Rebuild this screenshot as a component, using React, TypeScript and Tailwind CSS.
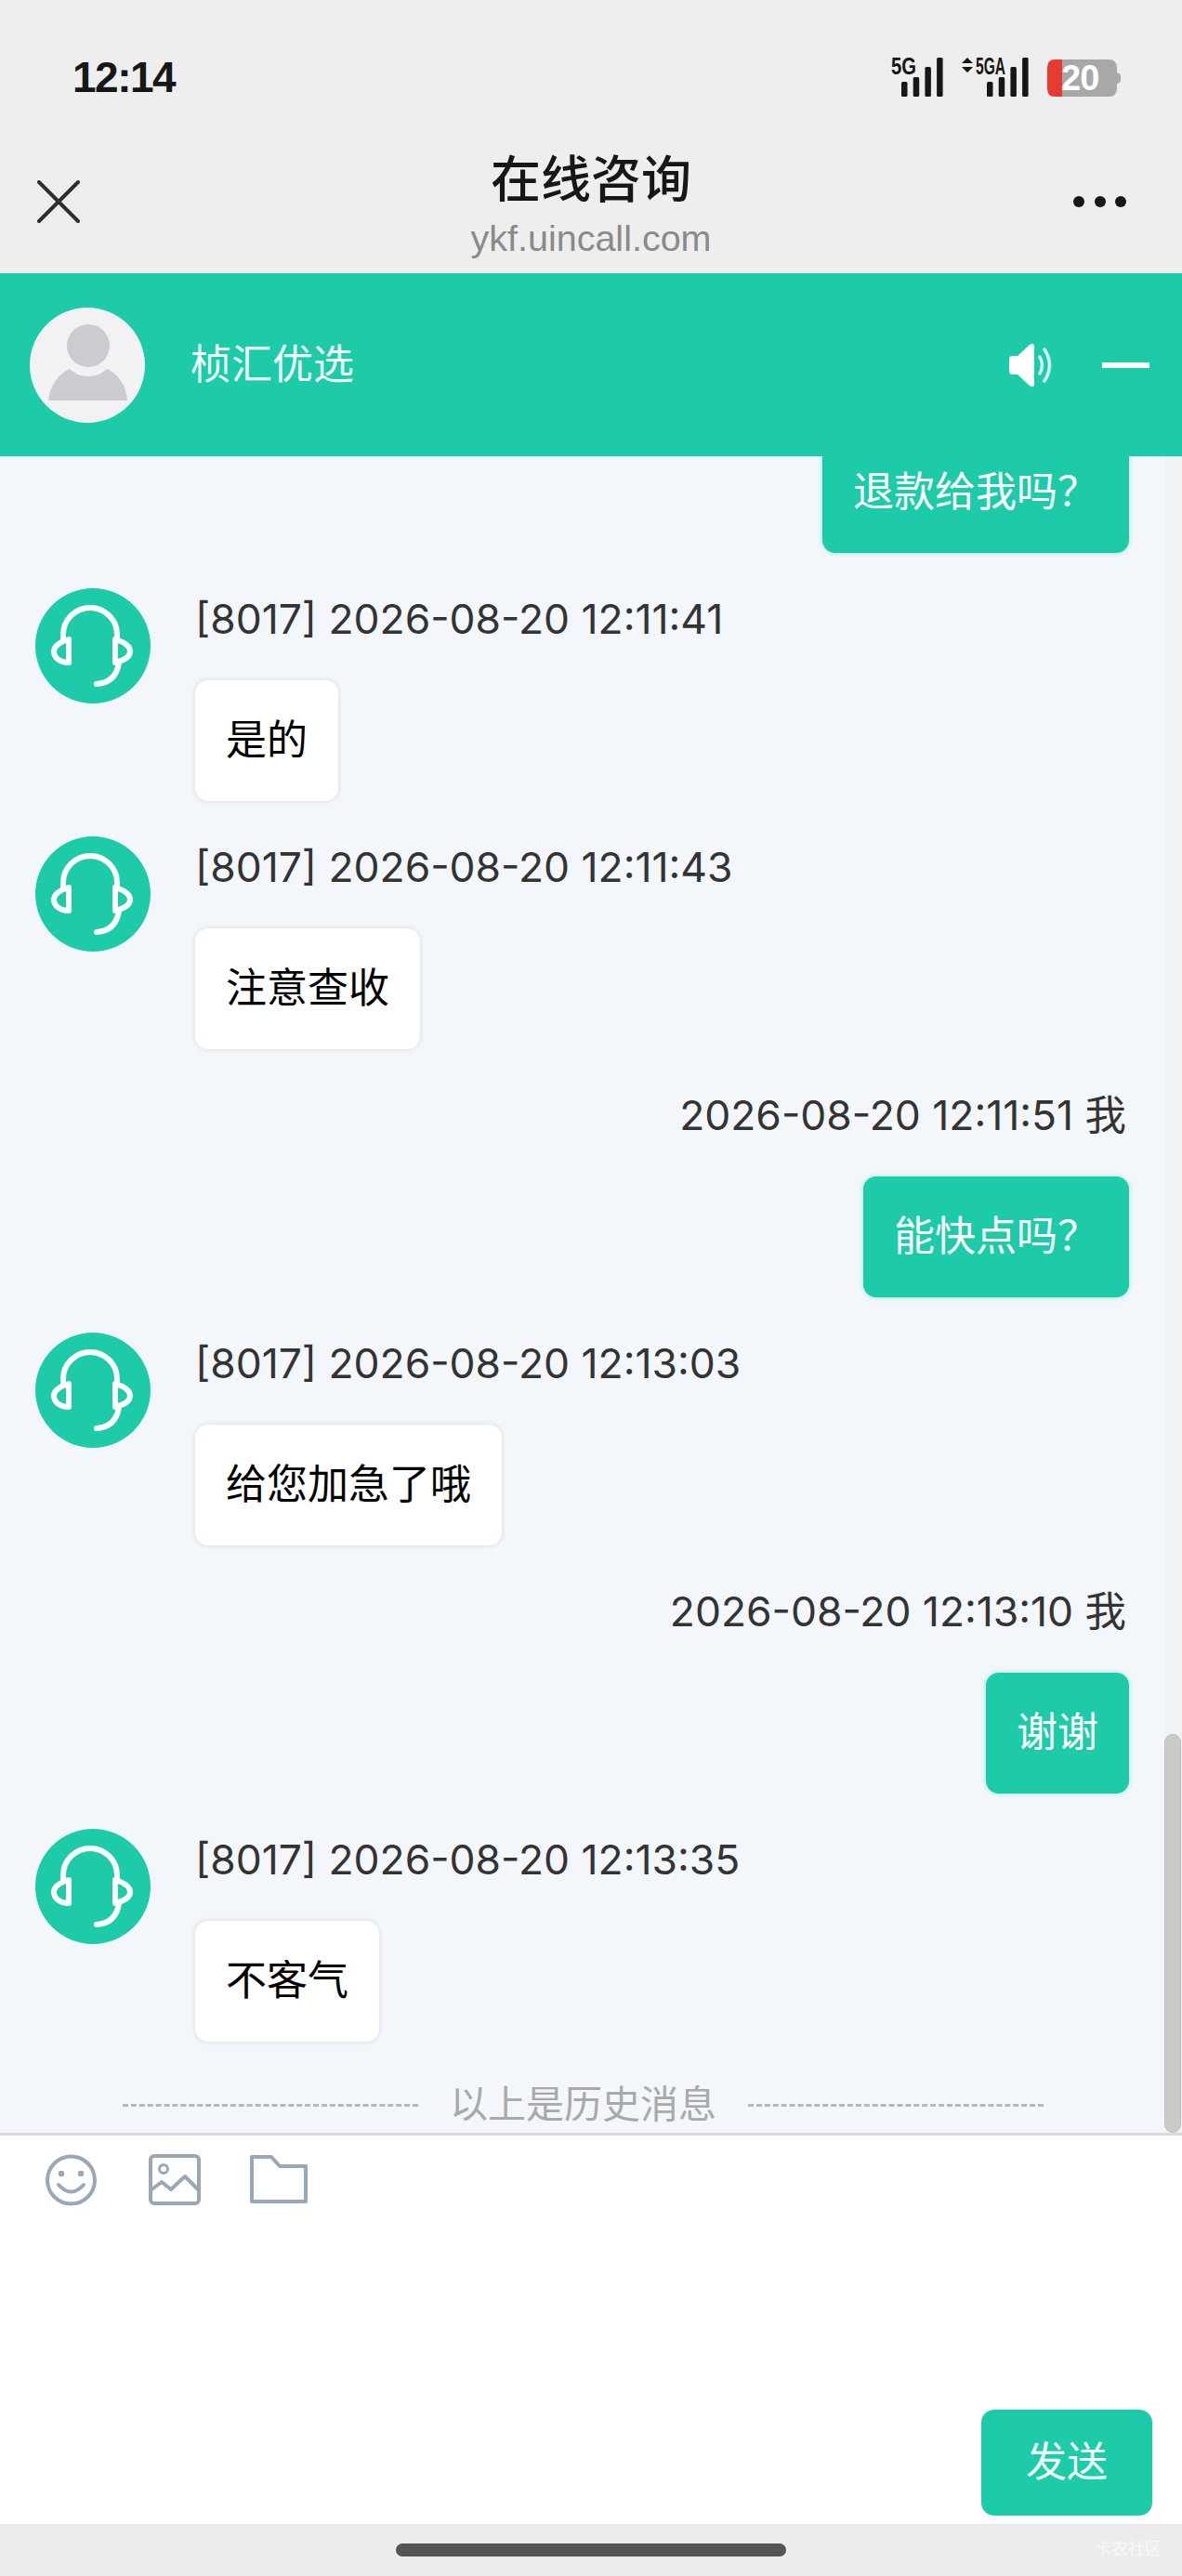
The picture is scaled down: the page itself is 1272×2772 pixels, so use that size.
import React from "react";

type Msg = { side: "agent" | "me"; time: string; text: string };

const messages: Msg[] = [
  { side: "agent", time: "[8017] 2026-08-20 12:11:41", text: "是的" },
  { side: "agent", time: "[8017] 2026-08-20 12:11:43", text: "注意查收" },
  { side: "me", time: "2026-08-20 12:11:51 我", text: "能快点吗？" },
  { side: "agent", time: "[8017] 2026-08-20 12:13:03", text: "给您加急了哦" },
  { side: "me", time: "2026-08-20 12:13:10 我", text: "谢谢" },
  { side: "agent", time: "[8017] 2026-08-20 12:13:35", text: "不客气" },
];

// Signal bars shared by both SIM indicators
function Bars({ x }: { x: number }) {
  return (
    <g fill="#171717">
      <rect x={x} y="26" width="6.5" height="16" rx="1.5" />
      <rect x={x + 12.7} y="21" width="6.5" height="21" rx="1.5" />
      <rect x={x + 25.4} y="10" width="6.5" height="32" rx="1.5" />
      <rect x={x + 38.1} y="0" width="6.5" height="42" rx="1.5" />
    </g>
  );
}

function StatusIcons() {
  return (
    <svg width="250" height="52" viewBox="0 -8 250 52" className="block">
      <text x="0" y="18" fontSize="25" fontWeight="700" fill="#171717" textLength="27" lengthAdjust="spacingAndGlyphs" fontFamily="Liberation Sans, sans-serif">5G</text>
      <Bars x={11} />
      <path d="M76 6 L82 0 L88 6 Z M76 10 L88 10 L82 16 Z" fill="#171717" />
      <text x="91" y="18" fontSize="25" fontWeight="700" fill="#171717" textLength="32" lengthAdjust="spacingAndGlyphs" fontFamily="Liberation Sans, sans-serif">5GA</text>
      <Bars x={103} />
      <path d="M176 2 H234 Q243 2 243 11 V33 Q243 42 234 42 H176 Z" fill="#a8a8a8" />
      <path d="M184 2 H176 Q168 2 168 11 V33 Q168 42 176 42 H184 Z" fill="#e63c30" />
      <path d="M243 16 Q247 17 247 20 V24 Q247 27 243 28 Z" fill="#a8a8a8" />
      <text x="183" y="35" fontSize="38" fontWeight="700" fill="#ffffff" letterSpacing="-1" fontFamily="Liberation Sans, sans-serif">20</text>
    </svg>
  );
}

function HeadsetAvatar() {
  return (
    <svg width="124" height="124" viewBox="0 0 124 124" className="block shrink-0">
      <circle cx="62" cy="62" r="62" fill="#1dcba8" />
      <g fill="none" stroke="#ffffff" strokeWidth="6" strokeLinecap="round" strokeLinejoin="round">
        <path d="M30 56 V50 A29 29 0 0 1 88 50 V56" />
        <path d="M36 55 C26 58 20 62 20 68 C20 75 27 80 36 80 Z" />
        <path d="M86 55 C96 58 102 62 102 68 C102 74 94 78 86 80 Z" />
        <path d="M90 80 C88 94 80 102 66 103" />
      </g>
    </svg>
  );
}

function PersonAvatar() {
  return (
    <svg width="124" height="124" viewBox="0 0 124 124" className="block shrink-0">
      <circle cx="62" cy="62" r="62" fill="#f2f2f4" />
      <circle cx="63" cy="41" r="23" fill="#cbcbd0" />
      <path d="M20 100 C22 84 30 72 43 66 C48 71 55 74 63 74 C71 74 78 71 83 66 C96 72 104 84 105 100 Z" fill="#cbcbd0" />
    </svg>
  );
}

function ChatRow({ msg }: { msg: Msg }) {
  if (msg.side === "me") {
    return (
      <div className="flex flex-col items-end pr-[57px] mt-[38px] h-[229px]">
        <div className="h-[66px] leading-[66px] text-[44.4px] [font-family:'Inter','Noto_Sans_CJK_SC',sans-serif] text-[#333333] mr-[3px] mb-[33px]">{msg.time}</div>
        <div className="rounded-[14px] bg-[#1dcba8] px-[33px] py-[32px] text-[44px] leading-[66px] text-white shadow-[0_0_5px_#8be8d4]">
          {msg.text}
        </div>
      </div>
    );
  }
  return (
    <div className="flex items-start gap-[48px] pl-[38px] mt-[38px] h-[229px]">
      <HeadsetAvatar />
      <div className="flex flex-col items-start">
        <div className="h-[66px] leading-[66px] text-[44.4px] [font-family:'Inter','Noto_Sans_CJK_SC',sans-serif] text-[#333333] mb-[33px]">{msg.time}</div>
        <div className="rounded-[14px] bg-white px-[33px] py-[32px] text-[44px] leading-[66px] text-black shadow-[0_0_5px_#d4d6da]">
          {msg.text}
        </div>
      </div>
    </div>
  );
}

export default function App() {
  return (
    <div className="relative w-full h-[2772px] flex flex-col overflow-hidden bg-white [font-family:'Liberation_Sans','Noto_Sans_CJK_SC',sans-serif]">
      {/* Status bar + browser nav */}
      <div className="h-[294px] shrink-0 bg-[#eeeeee]">
        <div className="flex h-[120px] items-start justify-between pl-[78px] pr-[63px] pt-[60px]">
          <span className="text-[46px] leading-[46px] font-bold tracking-[-1.5px] text-[#171717]">12:14</span>
          <div className="-mt-[6px]">
            <StatusIcons />
          </div>
        </div>
        <div className="grid grid-cols-[1fr_auto_1fr] items-start px-[40px]">
          <svg width="46" height="46" viewBox="0 0 46 46" className="block mt-[74px]">
            <path d="M2 2 L44 44 M44 2 L2 44" stroke="#2f2f2f" strokeWidth="4" strokeLinecap="round" />
          </svg>
          <div className="flex flex-col items-center pt-[42px]">
            <div className="text-[54px] leading-[64px] font-medium text-[#171717]">在线咨询</div>
            <div className="text-[39.5px] leading-[50px] mt-[5px] text-[#8a8a8a]">ykf.uincall.com</div>
          </div>
          <svg width="60" height="12" viewBox="0 0 60 12" className="block mt-[91px] mr-[17px] justify-self-end">
            <circle cx="6" cy="6" r="6" fill="#171717" />
            <circle cx="29" cy="6" r="6" fill="#171717" />
            <circle cx="51" cy="6" r="6" fill="#171717" />
          </svg>
        </div>
      </div>

      {/* Teal chat header */}
      <div className="h-[197px] shrink-0 flex items-center bg-[#1dcba8] pl-[32px] pr-[35px]">
        <PersonAvatar />
        <span className="ml-[49px] text-[44px] text-[#f2fffb]">桢汇优选</span>
        <svg width="50" height="48" viewBox="0 0 50 48" className="block ml-auto">
          <path d="M0 17 Q0 14 4 14 H9 L22 2 Q27 -1 27 4 V44 Q27 49 22 46 L9 34 H4 Q0 34 0 31 Z" fill="#ffffff" />
          <path d="M33 15 Q38 24 33 33 M38 7 Q49 24 38 41" fill="none" stroke="#d4fff4" strokeWidth="3.5" strokeLinecap="round" />
        </svg>
        <div className="ml-[50px] h-[6px] w-[51px] bg-white" />
      </div>

      {/* Message list */}
      <div className="relative h-[1804px] shrink-0 overflow-hidden bg-[#f3f6fa]">
        <div className="flex flex-col items-end pr-[57px] -mt-[26px]">
          <div className="rounded-[14px] bg-[#1dcba8] px-[33px] py-[32px] text-[44px] leading-[66px] text-white shadow-[0_0_5px_#8be8d4]">
            退款给我吗？
          </div>
        </div>
        {messages.map((m) => (
          <ChatRow key={m.time} msg={m} />
        ))}
        <div className="flex items-center mt-[38px] pl-[132px]">
          <div className="w-[318px] border-t-[3px] border-dashed border-[#b4b7bb]" />
          <span className="mx-[34px] text-[41px] leading-[60px] text-[#a9a9a9]">以上是历史消息</span>
          <div className="w-[318px] border-t-[3px] border-dashed border-[#b4b7bb]" />
        </div>
        {/* Scrollbar */}
        <div className="absolute right-0 top-0 bottom-0 w-[18px] bg-[#f1f2f4]" />
        <div className="absolute right-px bottom-0 top-[1375px] w-[18px] rounded-full border border-[#bcbcbc] bg-[#cacaca]" />
      </div>

      {/* Composer */}
      <div className="flex flex-1 flex-col border-t-[3px] border-[#d8dadc] bg-white">
        <div className="flex items-start pl-[49px] pt-[20px]">
          <svg width="55" height="56" viewBox="0 0 55 56" className="block">
            <circle cx="27.5" cy="28" r="25.5" fill="none" stroke="#9aa8b5" strokeWidth="4" />
            <circle cx="17" cy="21" r="3.2" fill="#9aa8b5" />
            <circle cx="38" cy="21" r="3.2" fill="#9aa8b5" />
            <path d="M14 33 Q27.5 48 41 33" fill="none" stroke="#9aa8b5" strokeWidth="4" strokeLinecap="round" />
          </svg>
          <svg width="56" height="56" viewBox="0 0 56 56" className="block ml-[56px]">
            <rect x="2" y="2" width="52" height="51" rx="4" fill="none" stroke="#9aa8b5" strokeWidth="4" />
            <circle cx="16" cy="16" r="4.5" fill="none" stroke="#9aa8b5" strokeWidth="3" />
            <path d="M2 39 L14 30 L24 38 L39 24 L54 39" fill="none" stroke="#9aa8b5" strokeWidth="4" strokeLinejoin="round" />
          </svg>
          <svg width="64" height="54" viewBox="0 0 64 54" className="block ml-[52px]">
            <path d="M3 3 H24 L33 13 H61 V51 H3 Z" fill="none" stroke="#9aa8b5" strokeWidth="4" strokeLinejoin="round" />
          </svg>
        </div>
        <button className="mt-auto mb-[9px] mr-[32px] self-end h-[114px] w-[184px] rounded-[14px] bg-[#1dcba8] text-[44px] text-[#f2fffb]">
          发送
        </button>
      </div>

      {/* Home indicator */}
      <div className="relative h-[56px] shrink-0 flex items-center justify-center bg-[#ececec]">
        <div className="h-[14px] w-[420px] rounded-full bg-[#555555]" />
        <span className="absolute right-[22px] top-[15px] text-[18px] leading-[24px] text-[#f8f8f8]">卡农社区</span>
      </div>
    </div>
  );
}
